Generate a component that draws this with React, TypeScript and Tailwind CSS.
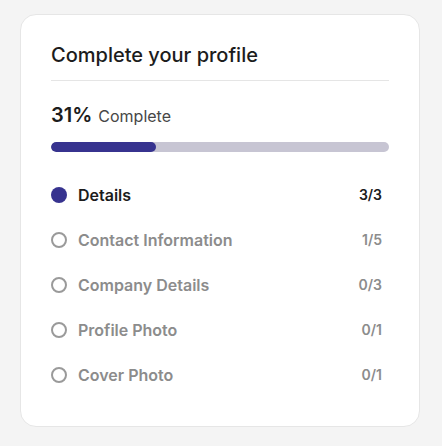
const steps = [
  { label: "Details", count: "3/3", done: true },
  { label: "Contact Information", count: "1/5", done: false },
  { label: "Company Details", count: "0/3", done: false },
  { label: "Profile Photo", count: "0/1", done: false },
  { label: "Cover Photo", count: "0/1", done: false },
];

const StepDot: React.FC<{ done: boolean }> = ({ done }) =>
  done ? (
    <span className="w-[16px] h-[16px] rounded-full bg-[#37338f] shrink-0" />
  ) : (
    <span className="w-[16px] h-[16px] rounded-full border-2 border-[#9a9a9a] shrink-0" />
  );

export default function App() {
  const percent = 31;
  return (
    <div
      className="min-h-[446px] bg-[#f4f4f4] pt-[14px] pl-[20px]"
      style={{ fontFamily: "Inter, 'Noto Sans', sans-serif" }}
    >
      <div className="w-[400px] bg-white rounded-[16px] border border-[#e6e6e6] px-[30px] pt-[26px] pb-[29px]">
        <div className="border-b border-[#e5e5e5] pb-[11px]">
          <h2 className="text-[20px] leading-[28px] font-medium text-[#1c1c1c]">Complete your profile</h2>
        </div>

        <div className="mt-[20px] flex items-baseline gap-[6px] leading-[28px]">
          <span className="text-[20px] font-semibold text-[#1c1c1c]">{percent}%</span>
          <span className="text-[16px] text-[#474747]">Complete</span>
        </div>

        <div className="mt-[12px] h-[10px] w-full rounded-full bg-[#c7c5d3] overflow-hidden">
          <div className="h-full rounded-full bg-[#37338f]" style={{ width: `${percent}%` }} />
        </div>

        <ul className="mt-[20px]">
          {steps.map((s) => (
            <li key={s.label} className="h-[45px] flex items-center justify-between">
              <div className="flex items-center gap-[11px]">
                <StepDot done={s.done} />
                <span
                  className={
                    s.done
                      ? "text-[16px] font-semibold text-[#1c1c1c]"
                      : "text-[16px] font-semibold text-[#8c8c8c]"
                  }
                >
                  {s.label}
                </span>
              </div>
              <span
                className={
                  s.done
                    ? "pr-[7px] text-[14px] font-semibold text-[#1c1c1c]"
                    : "pr-[7px] text-[14px] font-semibold text-[#8c8c8c]"
                }
              >
                {s.count}
              </span>
            </li>
          ))}
        </ul>
      </div>
    </div>
  );
}
